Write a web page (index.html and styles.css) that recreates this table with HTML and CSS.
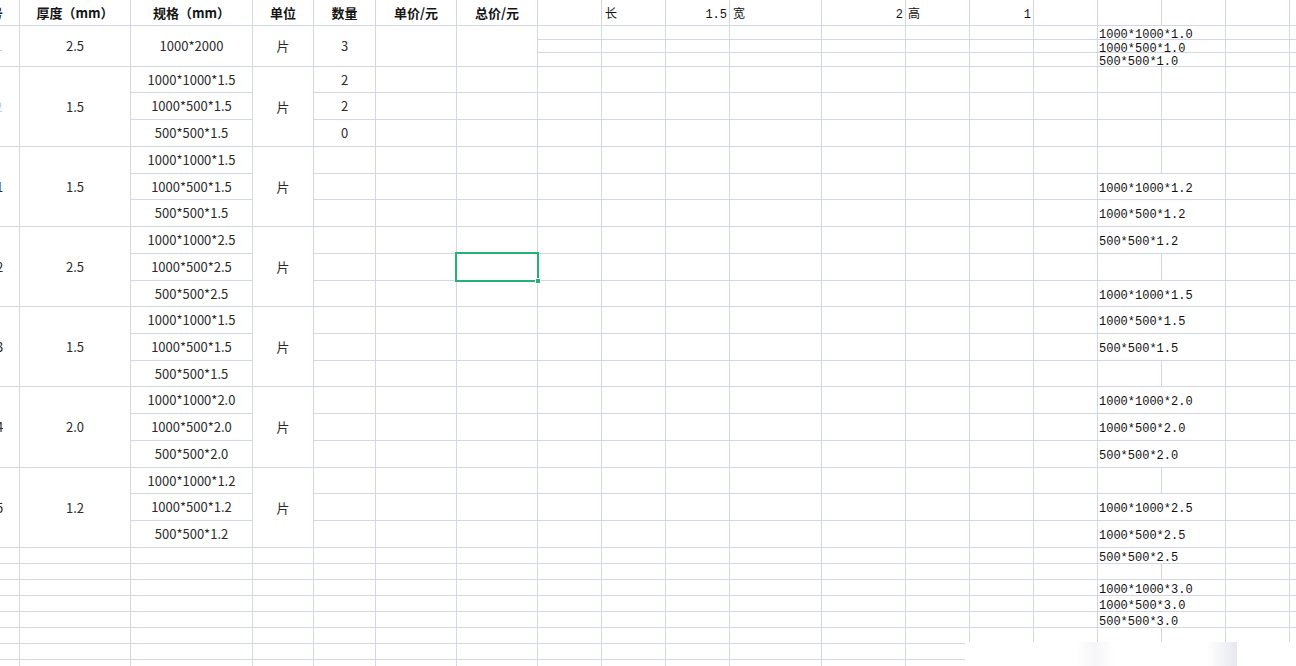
FILE: index.html
```html
<!DOCTYPE html>
<html lang="zh">
<head>
<meta charset="utf-8">
<title>报价表</title>
<link rel="stylesheet" href="styles.css">
</head>
<body>
<div class="sheet">
  <div class="left">
    <div class="c idx th"><span class="cut9">号</span></div><div class="c th">厚度（mm）</div><div class="c th">规格（mm）</div><div class="c th">单位</div><div class="c th">数量</div><div class="c th">单价/元</div><div class="c th">总价/元</div>

    <div class="c idx"><span class="lt">1</span></div><div class="c">2.5</div><div class="c">1000*2000</div><div class="c">片</div><div class="c">3</div><i></i><i></i>

    <div class="c idx v3"><span class="lt">2</span></div><div class="c v3">1.5</div><div class="c">1000*1000*1.5</div><div class="c v3">片</div><div class="c">2</div><i></i><i></i>
    <div class="c">1000*500*1.5</div><div class="c">2</div><i></i><i></i>
    <div class="c">500*500*1.5</div><div class="c">0</div><i></i><i></i>

    <div class="c idx v3"><span>1</span></div><div class="c v3">1.5</div><div class="c">1000*1000*1.5</div><div class="c v3">片</div><i></i><i></i><i></i>
    <div class="c">1000*500*1.5</div><i></i><i></i><i></i>
    <div class="c">500*500*1.5</div><i></i><i></i><i></i>

    <div class="c idx v3"><span>2</span></div><div class="c v3">2.5</div><div class="c">1000*1000*2.5</div><div class="c v3">片</div><i></i><i></i><i></i>
    <div class="c">1000*500*2.5</div><i></i><i></i><i class="sel"></i>
    <div class="c">500*500*2.5</div><i></i><i></i><i></i>

    <div class="c idx v3"><span>3</span></div><div class="c v3">1.5</div><div class="c">1000*1000*1.5</div><div class="c v3">片</div><i></i><i></i><i></i>
    <div class="c">1000*500*1.5</div><i></i><i></i><i></i>
    <div class="c">500*500*1.5</div><i></i><i></i><i></i>

    <div class="c idx v3"><span>4</span></div><div class="c v3">2.0</div><div class="c">1000*1000*2.0</div><div class="c v3">片</div><i></i><i></i><i></i>
    <div class="c">1000*500*2.0</div><i></i><i></i><i></i>
    <div class="c">500*500*2.0</div><i></i><i></i><i></i>

    <div class="c idx v3"><span>5</span></div><div class="c v3">1.2</div><div class="c">1000*1000*1.2</div><div class="c v3">片</div><i></i><i></i><i></i>
    <div class="c">1000*500*1.2</div><i></i><i></i><i></i>
    <div class="c">500*500*1.2</div><i></i><i></i><i></i>

    <i></i><i></i><i></i><i></i><i></i><i></i><i></i>
    <i></i><i></i><i></i><i></i><i></i><i></i><i></i>
    <i></i><i></i><i></i><i></i><i></i><i></i><i></i>
    <i></i><i></i><i></i><i></i><i></i><i></i><i></i>
    <i></i><i></i><i></i><i></i><i></i><i></i><i></i>
    <i></i><i></i><i></i><i></i><i></i><i></i><i></i>
    <i></i><i></i><i></i><i></i><i></i><i></i><i></i>
    <i></i><i></i><i></i><i></i><i></i><i></i><i></i>
  </div>

  <div class="right">
    <i></i><div class="d">长</div><div class="d r">1.5</div><div class="d">宽</div><div class="d r">2</div><div class="d">高</div><div class="d r">1</div><i></i><i></i><i></i><i></i><i></i>

    <i></i><i></i><i></i><i></i><i></i><i></i><i></i><i></i><div class="d w2 tight">1000*1000*1.0</div><i></i><i></i>
    <i></i><i></i><i></i><i></i><i></i><i></i><i></i><i></i><div class="d w2 tight">1000*500*1.0</div><i></i><i></i>
    <i></i><i></i><i></i><i></i><i></i><i></i><i></i><i></i><div class="d w2 tight">500*500*1.0</div><i></i><i></i>

    <i></i><i></i><i></i><i></i><i></i><i></i><i></i><i></i><i></i><i></i><i></i><i></i>
    <i></i><i></i><i></i><i></i><i></i><i></i><i></i><i></i><i></i><i></i><i></i><i></i>
    <i></i><i></i><i></i><i></i><i></i><i></i><i></i><i></i><i></i><i></i><i></i><i></i>
    <i></i><i></i><i></i><i></i><i></i><i></i><i></i><i></i><i></i><i></i><i></i><i></i>

    <i></i><i></i><i></i><i></i><i></i><i></i><i></i><i></i><div class="d w2">1000*1000*1.2</div><i></i><i></i>
    <i></i><i></i><i></i><i></i><i></i><i></i><i></i><i></i><div class="d w2">1000*500*1.2</div><i></i><i></i>
    <i></i><i></i><i></i><i></i><i></i><i></i><i></i><i></i><div class="d w2">500*500*1.2</div><i></i><i></i>
    <i></i><i></i><i></i><i></i><i></i><i></i><i></i><i></i><i></i><i></i><i></i><i></i>

    <i></i><i></i><i></i><i></i><i></i><i></i><i></i><i></i><div class="d w2">1000*1000*1.5</div><i></i><i></i>
    <i></i><i></i><i></i><i></i><i></i><i></i><i></i><i></i><div class="d w2">1000*500*1.5</div><i></i><i></i>
    <i></i><i></i><i></i><i></i><i></i><i></i><i></i><i></i><div class="d w2">500*500*1.5</div><i></i><i></i>
    <i></i><i></i><i></i><i></i><i></i><i></i><i></i><i></i><i></i><i></i><i></i><i></i>

    <i></i><i></i><i></i><i></i><i></i><i></i><i></i><i></i><div class="d w2">1000*1000*2.0</div><i></i><i></i>
    <i></i><i></i><i></i><i></i><i></i><i></i><i></i><i></i><div class="d w2">1000*500*2.0</div><i></i><i></i>
    <i></i><i></i><i></i><i></i><i></i><i></i><i></i><i></i><div class="d w2">500*500*2.0</div><i></i><i></i>
    <i></i><i></i><i></i><i></i><i></i><i></i><i></i><i></i><i></i><i></i><i></i><i></i>

    <i></i><i></i><i></i><i></i><i></i><i></i><i></i><i></i><div class="d w2">1000*1000*2.5</div><i></i><i></i>
    <i></i><i></i><i></i><i></i><i></i><i></i><i></i><i></i><div class="d w2">1000*500*2.5</div><i></i><i></i>
    <i></i><i></i><i></i><i></i><i></i><i></i><i></i><i></i><div class="d w2">500*500*2.5</div><i></i><i></i>
    <i></i><i></i><i></i><i></i><i></i><i></i><i></i><i></i><i></i><i></i><i></i><i></i>

    <i></i><i></i><i></i><i></i><i></i><i></i><i></i><i></i><div class="d w2">1000*1000*3.0</div><i></i><i></i>
    <i></i><i></i><i></i><i></i><i></i><i></i><i></i><i></i><div class="d w2">1000*500*3.0</div><i></i><i></i>
    <i></i><i></i><i></i><i></i><i></i><i></i><i></i><i></i><div class="d w2">500*500*3.0</div><i></i><i></i>
    <i></i><i></i><i></i><i></i><i></i><i></i><i></i><i></i><i></i><i></i><i></i><i></i>
    <i></i><i></i><i></i><i></i><i></i><i></i><i></i><i></i><i></i><i></i><i></i><i></i>
    <i></i><i></i><i></i><i></i><i></i><i></i><i></i><i></i><i></i><i></i><i></i><i></i>
  </div>

  <div class="fade"></div>
</div>
</body>
</html>
```

FILE: styles.css
```css
html, body {
  margin: 0;
  padding: 0;
  background: #ffffff;
  overflow: hidden;
}

.sheet {
  position: relative;
  display: flex;
  align-items: flex-start;
  width: 1296px;
  height: 666px;
  overflow: hidden;
  background: #ffffff;
}

.left,
.right {
  display: grid;
  gap: 1px;
  background: #d2d6e5;
  flex: none;
}

.left {
  grid-template-columns: 19px 110px 121px 60px 61px 80px 80px;
  grid-template-rows: 25px 40px
    25px 26px 26px 26px 25px 26px 26px 26px 25px
    26px 26px 25px 26px 26px 26px 25px 26px 26px
    repeat(8, 15px);
  border-right: 1px solid #d2d6e5;
  font-family: "Noto Sans CJK SC", "Noto Sans", sans-serif;
  font-size: 13px;
  color: #2b2b2b;
}

.right {
  grid-template-columns: 63px 63px 63px 91px 83px 63px 63px 63px 63px 63px 63px 63px;
  grid-template-rows: 25px 13px 12px 13px
    25px 26px 26px 26px 25px 26px 26px 26px 25px
    26px 26px 25px 26px 26px 26px 25px 26px 26px
    repeat(8, 15px);
  font-family: "Liberation Mono", "Noto Sans CJK SC", monospace;
  font-size: 12px;
  color: #111111;
}

.left > i,
.right > i {
  display: block;
  background: #ffffff;
}

.c {
  background: #ffffff;
  display: flex;
  align-items: center;
  justify-content: center;
  white-space: nowrap;
  overflow: hidden;
  line-height: 16px;
}

.th {
  font-weight: bold;
  color: #151515;
}

.v3 {
  grid-row: span 3;
}

.idx {
  justify-content: flex-start;
}

.idx span {
  margin-left: -4px;
}

.idx .cut9 {
  margin-left: -10px;
}

.idx .lt {
  color: #b4cdeb;
  margin-left: -5px;
}

.sel {
  position: relative;
  z-index: 2;
  outline: 2px solid #20b374;
}

.sel::after {
  content: "";
  position: absolute;
  right: -4px;
  bottom: -4px;
  width: 4px;
  height: 4px;
  background: #20b374;
  border: 1px solid #ffffff;
}

.d {
  background: #ffffff;
  display: flex;
  align-items: center;
  padding: 4px 2px 0 1px;
  white-space: nowrap;
  line-height: 12px;
}

.d.tight {
  padding-top: 5px;
}

.d.r {
  justify-content: flex-end;
}

.w2 {
  grid-column: span 2;
}

.right > .d:nth-child(2),
.right > .d:nth-child(4) {
  padding-left: 3px;
}

.right > .d:nth-child(6) {
  padding-left: 2px;
}

.fade {
  position: absolute;
  left: 965px;
  top: 642px;
  width: 331px;
  height: 24px;
  background:
    linear-gradient(to right, rgba(233, 235, 241, 0), #e6e8ef) no-repeat 242px 0 / 30px 24px,
    linear-gradient(to right, rgba(248, 248, 250, 0), #f6f6f8, rgba(248, 248, 250, 0)) no-repeat 110px 0 / 40px 24px,
    #ffffff;
}
```
